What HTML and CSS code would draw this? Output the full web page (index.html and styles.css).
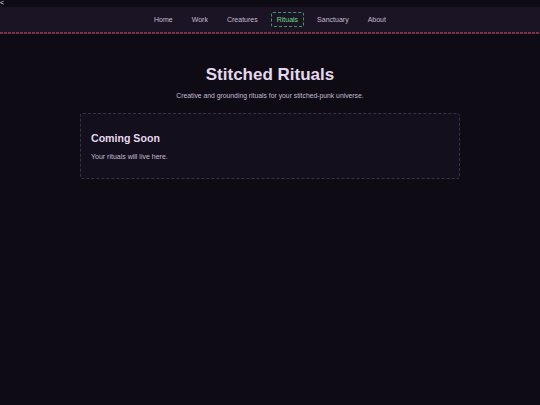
FILE: index.html
```html
<!DOCTYPE html>
<html lang="en">
<head>
  <meta charset="UTF-8">
  <meta name="viewport" content="width=device-width, initial-scale=1.0">
  <title>Stitched Rituals</title>
  <link rel="stylesheet" href="styles.css">
</head>
<body>
  <div class="back">&lt;</div>

  <nav class="site-nav">
    <a href="#">Home</a>
    <a href="#">Work</a>
    <a href="#">Creatures</a>
    <a href="#" class="current">Rituals</a>
    <a href="#">Sanctuary</a>
    <a href="#">About</a>
  </nav>

  <main class="page">
    <header class="page-head">
      <h1>Stitched Rituals</h1>
      <p>Creative and grounding rituals for your stitched-punk universe.</p>
    </header>

    <section class="card">
      <h2>Coming Soon</h2>
      <p>Your rituals will live here.</p>
    </section>
  </main>
</body>
</html>
```

FILE: styles.css
```css
:root {
  --bg: #0e0b14;
  --nav: #1b1425;
  --card: #140f1d;
  --text: #e4d8ee;
  --muted: #c6bad2;
  --stitch: #7e3246;
  --green: #6bd98a;
}

body {
  margin: 0;
  background-color: var(--bg);
  color: var(--text);
  font-family: 'Liberation Sans', Arial, sans-serif;
  min-height: 405px;
}

.back {
  height: 7px;
  font-size: 7px;
  line-height: 6px;
  color: #e8e0ee;
}

/* stitched line under the nav */
.site-nav {
  display: flex;
  justify-content: center;
  align-items: center;
  gap: 19px;
  height: 25px;
  padding-bottom: 2px;
  background:
    repeating-linear-gradient(90deg, var(--stitch) 0 3px, transparent 3px 4px) bottom / 100% 2px no-repeat,
    var(--nav);
}

.site-nav a {
  font-size: 7px;
  color: var(--muted);
  text-decoration: none;
}

.site-nav a.current {
  color: var(--green);
  border: 1px dashed #3d9b5e;
  border-radius: 2px;
  padding: 3px 5px;
  margin: 0 -6px;
}

.page {
  max-width: 380px;
  margin: 0 auto;
  padding-top: 30px;
}

.page-head {
  text-align: center;
}

.page-head h1 {
  margin: 0;
  font-size: 17px;
  font-weight: bold;
  line-height: 22px;
}

.page-head p {
  margin: 6px 0 0;
  font-size: 6.8px;
  color: var(--muted);
}

.card {
  margin-top: 14px;
  background-color: var(--card);
  border: 1px dashed #3b3049;
  border-radius: 3px;
  padding: 17px 10px 18px;
}

.card h2 {
  margin: 0;
  font-size: 10.6px;
  line-height: 14px;
}

.card p {
  margin: 8px 0 0;
  font-size: 7px;
  color: var(--muted);
}
```
